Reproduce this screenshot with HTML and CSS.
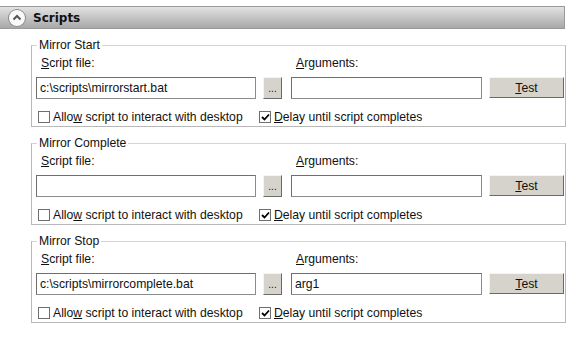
FILE: index.html
```html
<!DOCTYPE html>
<html lang="en">
<head>
  <meta charset="UTF-8">
  <title>Scripts</title>
  <link rel="stylesheet" href="styles.css">
</head>
<body>

<div class="section-header">
  <span class="collapse-btn">
    <svg width="16" height="16" viewBox="0 0 16 16"><path d="M4.5 9.5 L8 6 L11.5 9.5" fill="none" stroke="#555" stroke-width="2"/></svg>
  </span>
  <span class="section-title">Scripts</span>
</div>

<div class="scripts">

  <fieldset class="group">
    <legend>Mirror Start</legend>
    <div class="row labels">
      <label><u>S</u>cript file:</label>
      <span></span>
      <label><u>A</u>rguments:</label>
    </div>
    <div class="row fields">
      <input type="text" class="field" value="c:\scripts\mirrorstart.bat">
      <button class="btn browse">...</button>
      <input type="text" class="field" value="">
      <button class="btn test"><u>T</u>est</button>
    </div>
    <div class="checks">
      <span class="check check-allow"><span class="box"></span><span>Allo<u>w</u> script to interact with desktop</span></span>
      <span class="check"><span class="box"><svg width="9" height="9" viewBox="0 0 9 9"><path d="M1 4 L3.5 6.5 L8 1.5" fill="none" stroke="#000" stroke-width="1.8"/></svg></span><span><u>D</u>elay until script completes</span></span>
    </div>
  </fieldset>

  <fieldset class="group">
    <legend>Mirror Complete</legend>
    <div class="row labels">
      <label><u>S</u>cript file:</label>
      <span></span>
      <label><u>A</u>rguments:</label>
    </div>
    <div class="row fields">
      <input type="text" class="field" value="">
      <button class="btn browse">...</button>
      <input type="text" class="field" value="">
      <button class="btn test"><u>T</u>est</button>
    </div>
    <div class="checks">
      <span class="check check-allow"><span class="box"></span><span>Allo<u>w</u> script to interact with desktop</span></span>
      <span class="check"><span class="box"><svg width="9" height="9" viewBox="0 0 9 9"><path d="M1 4 L3.5 6.5 L8 1.5" fill="none" stroke="#000" stroke-width="1.8"/></svg></span><span><u>D</u>elay until script completes</span></span>
    </div>
  </fieldset>

  <fieldset class="group">
    <legend>Mirror Stop</legend>
    <div class="row labels">
      <label><u>S</u>cript file:</label>
      <span></span>
      <label><u>A</u>rguments:</label>
    </div>
    <div class="row fields">
      <input type="text" class="field" value="c:\scripts\mirrorcomplete.bat">
      <button class="btn browse">...</button>
      <input type="text" class="field" value="arg1">
      <button class="btn test"><u>T</u>est</button>
    </div>
    <div class="checks">
      <span class="check check-allow"><span class="box"></span><span>Allo<u>w</u> script to interact with desktop</span></span>
      <span class="check"><span class="box"><svg width="9" height="9" viewBox="0 0 9 9"><path d="M1 4 L3.5 6.5 L8 1.5" fill="none" stroke="#000" stroke-width="1.8"/></svg></span><span><u>D</u>elay until script completes</span></span>
    </div>
  </fieldset>

</div>

</body>
</html>
```

FILE: styles.css
```css
body {
  margin: 0;
  background: #fff;
  font-family: "Liberation Sans", Arial, sans-serif;
  font-size: 12.2px;
  color: #111;
}
.section-header {
  margin-top: 6px;
  width: 564px;
  height: 21px;
  border: 1px solid #9a9a9a;
  border-left: none;
  background: linear-gradient(#e2e2e2, #a8a8a8);
  display: flex;
  align-items: center;
}
.collapse-btn {
  width: 16px;
  height: 16px;
  margin-left: 9px;
  border-radius: 50%;
  background: #fafafa;
  box-shadow: 0 0 0 1px #8c8c8c;
  display: flex;
}
.section-title {
  margin-left: 8px;
  font-family: "DejaVu Sans", sans-serif;
  font-weight: bold;
  font-size: 12px;
  color: #111;
}
.scripts {
  padding-left: 31px;
  width: 535px;
}
.group {
  margin: 9px 0 0;
  padding: 0 1px 2px 4px;
  border: 1px solid #b8b8b8;
  border-top-color: #d4d4d4;
}
legend {
  margin-left: 1px;
  padding: 0 2px;
  line-height: 14px;
}
.row {
  display: grid;
  grid-template-columns: 220px 21px 191px 75px;
  column-gap: 7px;
}
.row > :nth-child(2) { margin-right: 2px; }
.labels {
  margin-top: 4px;
  line-height: 14px;
}
.labels label {
  padding-left: 5px;
}
.fields {
  margin-top: 7px;
  height: 22px;
}
.field {
  box-sizing: border-box;
  height: 22px;
  width: 100%;
  margin: 0;
  padding: 0 3px;
  font: inherit;
  color: #111;
  border: 1px solid #8c8c8c;
  border-top-color: #6f6f6f;
  border-left-color: #6f6f6f;
  background: #fff;
}
.btn {
  box-sizing: border-box;
  margin: 0;
  padding: 0;
  font: inherit;
  color: #111;
  background: #d6d3cc;
  border: 1px solid;
  border-color: #f4f4f4 #6a6a6a #6a6a6a #f4f4f4;
}
.browse {
  font-size: 10px;
  height: 22px;
}
.test {
  height: 21px;
}
.checks {
  margin-top: 11px;
  display: flex;
  line-height: 14px;
  padding-left: 2px;
}
.check {
  display: flex;
  align-items: center;
}
.check-allow {
  width: 221px;
}
.box {
  box-sizing: border-box;
  width: 12px;
  height: 12px;
  margin-right: 3px;
  border: 1px solid #6f6f6f;
  background: #fff;
  display: flex;
  align-items: center;
  justify-content: center;
}
```
